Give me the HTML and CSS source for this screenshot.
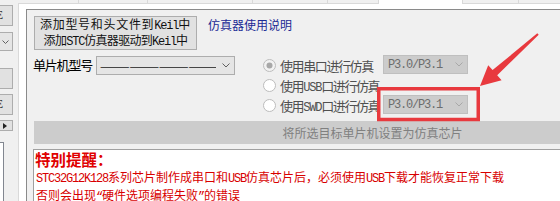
FILE: index.html
```html
<!DOCTYPE html>
<html>
<head>
<meta charset="utf-8">
<link rel="stylesheet" href="styles.css">
</head>
<body>
<div class="app">
  <div class="side">
    <div class="sbtn a"><span class="frag">E</span></div>
    <div class="sbtn b"><svg width="7" height="4" viewBox="0 0 7 4"><polyline points="0.5,0.5 3.5,3.5 6.5,0.5" fill="none" stroke="#606060" stroke-width="1"/></svg></div>
    <div class="sbtn c"></div>
    <div class="sbtn d"><span class="frag">E</span></div>
    <div class="sbtn e"><svg width="4" height="6" viewBox="0 0 4 6"><polygon points="0,0 4,3 0,6" fill="#222"/></svg></div>
    <div class="slist"></div>
  </div>
  <div class="main">
    <div class="tabstrip">
      <div class="tab t1"></div>
      <div class="tab t2"></div>
      <div class="tab t3"></div>
      <div class="tab t4"></div>
      <div class="tab t5"></div>
      <div class="tab sel"></div>
      <div class="tab t7"></div>
      <div class="tab t8"></div>
    </div>
    <div class="page">
      <div class="panel">
        <div class="row1">
          <div class="addbtn">
            <span class="l1">添加型号和头文件到<span class="lat">Keil</span>中</span>
            <span class="l2">添加<span class="lat">STC</span>仿真器驱动到<span class="lat">Keil</span>中</span>
          </div>
          <a class="link">仿真器使用说明</a>
        </div>
        <div class="row2">
          <div class="model">
            <span class="mlabel">单片机型号</span>
            <div class="combo mcombo">
              <span class="dash">————————————</span>
              <svg width="8" height="5" viewBox="0 0 8 5"><polyline points="0.5,0.5 4,4 7.5,0.5" fill="none" stroke="#606060" stroke-width="1"/></svg>
            </div>
          </div>
          <div class="radios">
            <div class="ropt">
              <svg width="13" height="13" viewBox="0 0 13 13"><circle cx="6.5" cy="6.5" r="6" fill="#f2f2f2" stroke="#bcbcbc"/><circle cx="6.5" cy="6.5" r="3" fill="#a8a8a8"/></svg>
              <span class="rtext">使用串口进行仿真</span>
            </div>
            <div class="combo pcombo">
              <span class="lat">P3.0/P3.1</span>
              <svg width="8" height="5" viewBox="0 0 8 5"><polyline points="0.5,0.5 4,4 7.5,0.5" fill="none" stroke="#a8a8a8" stroke-width="1"/></svg>
            </div>
            <div class="ropt">
              <svg width="13" height="13" viewBox="0 0 13 13"><circle cx="6.5" cy="6.5" r="6" fill="#ffffff" stroke="#bcbcbc"/></svg>
              <span class="rtext">使用<span class="lat">USB</span>口进行仿真</span>
            </div>
            <div class="cell"></div>
            <div class="ropt">
              <svg width="13" height="13" viewBox="0 0 13 13"><circle cx="6.5" cy="6.5" r="6" fill="#ffffff" stroke="#bcbcbc"/></svg>
              <span class="rtext">使用<span class="lat">SWD</span>口进行仿真</span>
            </div>
            <div class="combo pcombo">
              <span class="lat">P3.0/P3.1</span>
              <svg width="8" height="5" viewBox="0 0 8 5"><polyline points="0.5,0.5 4,4 7.5,0.5" fill="none" stroke="#a8a8a8" stroke-width="1"/></svg>
            </div>
          </div>
        </div>
        <div class="bar">将所选目标单片机设置为仿真芯片</div>
        <div class="note">
          <div class="ntitle">特别提醒：</div>
          <div class="nline"><span class="lat">STC32G12K128</span>系列芯片制作成串口和<span class="lat">USB</span>仿真芯片后，必须使用<span class="lat">USB</span>下载才能恢复正常下载</div>
          <div class="nline">否则会出现<span class="lat">“</span>硬件选项编程失败<span class="lat">”</span>的错误</div>
        </div>
      </div>
    </div>
  </div>
</div>
<svg class="annot" width="560" height="201" viewBox="0 0 560 201">
  <rect x="378.75" y="88.75" width="99.5" height="30.75" fill="none" stroke="#e8393e" stroke-width="3.5"/>
  <polygon points="480,86 488.2,65.2 492.6,70.1 537.3,33.3 538.7,34.7 497.2,75.3 501.6,80.2" fill="#e8393e"/>
</svg>
</body>
</html>
```

FILE: styles.css
```css
html, body {
  margin: 0;
  padding: 0;
}
body {
  width: 560px;
  height: 201px;
  overflow: hidden;
  position: relative;
  background: #f0f0f0;
  font-family: "Noto Sans CJK SC", sans-serif;
  font-size: 12px;
  color: #000;
}
.app {
  display: flex;
  height: 201px;
}
.side {
  width: 18px;
  flex: none;
  display: flex;
  flex-direction: column;
  overflow: hidden;
}
.sbtn {
  margin-left: -10px;
  width: 23px;
  box-sizing: border-box;
  border: 1px solid #adadad;
  background: #e1e1e1;
  overflow: hidden;
  display: flex;
  align-items: center;
  justify-content: flex-end;
  flex: none;
}
.frag {
  font-family: "Liberation Serif", serif;
  font-size: 12px;
  line-height: 19px;
  padding-right: 9px;
  color: #222;
}
.a { margin-top: 5px; height: 21px; }
.b { margin-top: 6px; height: 19px; padding-right: 3px; background: #e5e5e5; }
.c { margin-top: 17px; height: 21px; }
.d { margin-top: 5px; height: 21px; }
.e { margin-top: 5px; height: 11px; padding-right: 5px; }
.e svg, .b svg { display: block; }
.slist {
  margin-left: -10px;
  width: 14px;
  margin-top: 11px;
  flex: 1;
  box-sizing: border-box;
  border: 1px solid #828790;
  border-bottom: none;
  background: #fff;
}
.main {
  flex: 1;
  min-width: 0;
  display: flex;
  flex-direction: column;
  overflow: hidden;
}
.tabstrip {
  display: flex;
  height: 4px;
  flex: none;
}
.tab {
  box-sizing: border-box;
  height: 4px;
  background: #f0f0f0;
  border-right: 1px solid #d9d9d9;
  border-bottom: 1px solid #d9d9d9;
  flex: none;
}
.t1 { width: 61px; }
.t2 { width: 69px; }
.t3 { width: 105px; }
.t4 { width: 75px; }
.t5 { width: 51px; }
.sel { width: 84px; background: #fff; border-bottom: none; }
.t7 { width: 56px; }
.t8 { flex: 1; border-right: none; }
.page {
  flex: 1;
  background: #fff;
  border-left: 1px solid #d9d9d9;
  padding: 5px 0 0 7px;
  overflow: hidden;
}
.panel {
  width: 800px;
  height: 300px;
  box-sizing: border-box;
  border: 1px solid #8a8a8a;
  background: #f0f0f0;
  padding: 6px 0 0 6px;
}
.lat {
  font-family: "Liberation Mono", monospace;
  font-size: 12px;
  letter-spacing: -1.2px;
}
.row1 {
  display: flex;
  align-items: flex-start;
}
.addbtn {
  margin-left: 1px;
  width: 163px;
  height: 34px;
  box-sizing: border-box;
  border: 1px solid #adadad;
  background: #e1e1e1;
  display: flex;
  flex-direction: column;
  justify-content: center;
  align-items: center;
  color: #111;
}
.l1, .l2 {
  display: block;
  line-height: 13px;
  white-space: nowrap;
}
.l1 { letter-spacing: 0.7px; }
.l2 { letter-spacing: -0.7px; }
.link {
  margin-left: 11px;
  margin-top: 1px;
  line-height: 16px;
  color: #1b2a95;
}
.row2 {
  display: flex;
  margin-top: 5px;
}
.model {
  display: flex;
  align-items: flex-start;
  height: 20px;
}
.mlabel {
  width: 59px;
  margin-right: 4px;
  font-size: 13px;
  letter-spacing: -1.2px;
  line-height: 20px;
  white-space: nowrap;
}
.combo {
  display: flex;
  align-items: center;
  justify-content: space-between;
  box-sizing: border-box;
  height: 19px;
}
.combo svg { display: block; flex: none; }
.mcombo {
  margin-top: 1px;
  width: 139px;
  border: 1px solid #adadad;
  background: #e5e5e5;
  padding: 0 4px 0 3px;
}
.dash {
  width: 116px;
  overflow: hidden;
  white-space: nowrap;
  line-height: 17px;
  color: #222;
}
.radios {
  margin-left: 28px;
  display: grid;
  grid-template-columns: 120px 85px;
  grid-auto-rows: 20px;
}
.ropt {
  display: flex;
  align-items: center;
  gap: 4px;
  height: 20px;
  white-space: nowrap;
}
.ropt svg { display: block; flex: none; }
.rtext {
  font-size: 13px;
  letter-spacing: -1.4px;
  color: #505050;
}
.pcombo {
  width: 85px;
  border: 1px solid #bfbfbf;
  background: #cccccc;
  padding: 0 4px 0 4px;
  color: #6d6d6d;
}
.bar {
  margin-top: 6px;
  margin-left: 1px;
  width: 677px;
  height: 23px;
  background: #cccccc;
  color: #808080;
  line-height: 23px;
  text-align: center;
  white-space: nowrap;
}
.note {
  margin-top: 5px;
  width: 760px;
  height: 100px;
  box-sizing: border-box;
  border: 1px solid #a0a0a0;
  background: #fff;
  padding-left: 2px;
  color: #d80000;
}
.ntitle {
  margin-left: -1px;
  font-size: 15.5px;
  font-weight: 700;
  line-height: 19px;
  color: #e00000;
}
.nline {
  line-height: 16px;
  white-space: nowrap;
}
.annot {
  position: absolute;
  left: 0;
  top: 0;
  pointer-events: none;
}
```
